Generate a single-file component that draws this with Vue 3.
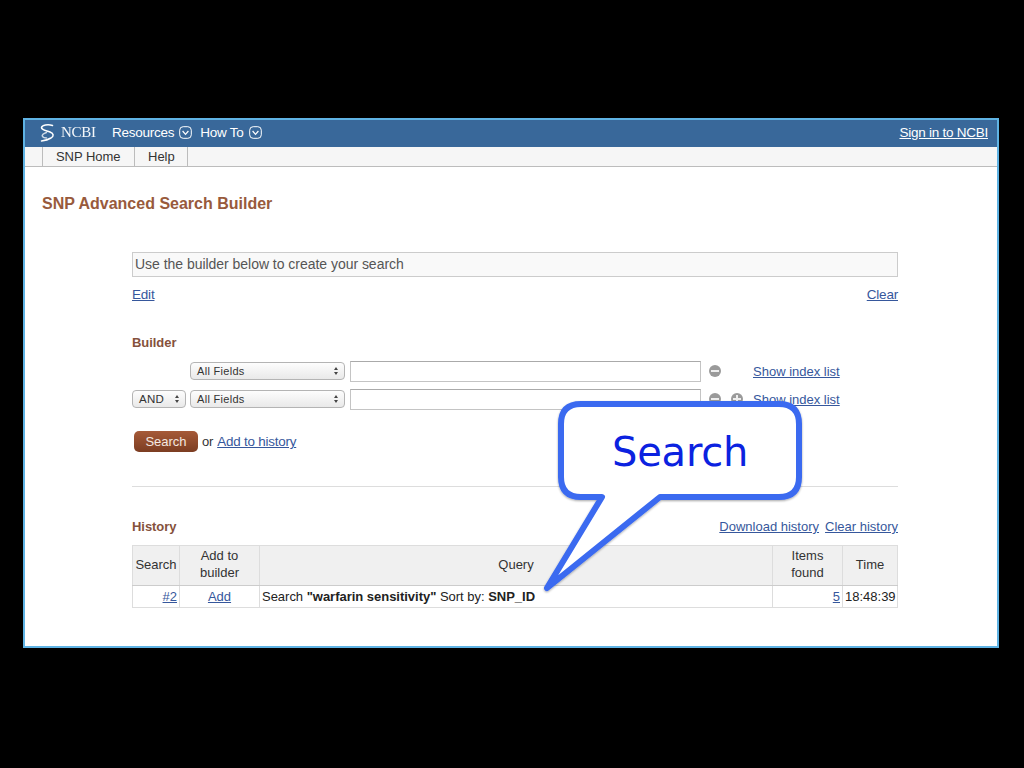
<script setup>
const fields = [
  { id: 1, op: false, plus: false },
  { id: 2, op: true, plus: true }
]
</script>

<template>
  <div class="stage">
    <div class="window">
      <header class="topbar">
        <div class="brand">
          <svg class="helix" width="16" height="20" viewBox="0 0 16 20" fill="none" stroke="#fff" stroke-width="1.5" stroke-linecap="round">
            <path d="M12.5 2.5 C8 1 2 2 1.5 4.5 C1.2 7 6 7.5 10 9 C14 10.5 14 13 11 15 C8.5 16.5 5 17.5 1.5 18" />
            <path d="M6.5 9.5 C3.5 10.5 1.5 12 2.5 13.5 C3.2 14.5 5 15 6.5 15" opacity="0.75" />
          </svg>
          <span class="ncbi">NCBI</span>
        </div>
        <span class="menu">Resources</span>
        <span class="chev"><svg width="13" height="13" viewBox="0 0 13 13" fill="none" stroke="#fff"><rect x="0.7" y="0.7" width="11.6" height="11.6" rx="3.5" /><path d="M3.6 5 L6.5 8.4 L9.4 5" stroke-width="1.2" /></svg></span>
        <span class="menu howto">How To</span>
        <span class="chev"><svg width="13" height="13" viewBox="0 0 13 13" fill="none" stroke="#fff"><rect x="0.7" y="0.7" width="11.6" height="11.6" rx="3.5" /><path d="M3.6 5 L6.5 8.4 L9.4 5" stroke-width="1.2" /></svg></span>
        <a class="signin">Sign in to NCBI</a>
      </header>

      <nav class="tabs">
        <span class="tab tab-home">SNP Home</span>
        <span class="tab tab-help">Help</span>
      </nav>

      <h1 class="title">SNP Advanced Search Builder</h1>

      <main class="content">
        <div class="querybox">Use the builder below to create your search</div>
        <div class="links-row">
          <a class="link">Edit</a>
          <a class="link">Clear</a>
        </div>

        <h2 class="section builder-head">Builder</h2>

        <div v-for="f in fields" :key="f.id" class="field-row">
          <div class="op-slot">
            <div v-if="f.op" class="select op">AND<span class="arrows"></span></div>
          </div>
          <div class="select fields">All Fields<span class="arrows"></span></div>
          <div class="textinput"></div>
          <span class="round minus"><i></i></span>
          <span class="plus-slot"><span v-if="f.plus" class="round plus"><i></i><b></b></span></span>
          <a class="link index">Show index list</a>
        </div>

        <div class="actions">
          <span class="btn">Search</span>
          <span class="or">or</span>
          <a class="link">Add to history</a>
        </div>

        <hr class="rule" />

        <div class="history-head">
          <h2 class="section">History</h2>
          <div class="history-links">
            <a class="link">Download history</a>
            <a class="link">Clear history</a>
          </div>
        </div>

        <table class="history">
          <colgroup>
            <col class="c1" /><col class="c2" /><col class="c3" /><col class="c4" /><col class="c5" />
          </colgroup>
          <thead>
            <tr>
              <th>Search</th>
              <th>Add to<br />builder</th>
              <th>Query</th>
              <th>Items<br />found</th>
              <th>Time</th>
            </tr>
          </thead>
          <tbody>
            <tr>
              <td class="right"><a class="link">#2</a></td>
              <td class="center"><a class="link">Add</a></td>
              <td class="query">Search <b>"warfarin sensitivity"</b> Sort by: <b>SNP_ID</b></td>
              <td class="right"><a class="link">5</a></td>
              <td class="right">18:48:39</td>
            </tr>
          </tbody>
        </table>
      </main>
    </div>

    <div class="callout">
      <svg width="270" height="200" viewBox="0 0 270 200">
        <defs>
          <filter id="sh" x="-5%" y="-5%" width="110%" height="110%">
            <feDropShadow dx="0" dy="1" stdDeviation="1.2" flood-color="#000" flood-opacity="0.35" />
          </filter>
        </defs>
        <path
          d="M41 6 H239 Q259 6 259 26 V79 Q259 99 239 99 H120 L7 190 L62 99 H41 Q21 99 21 79 V26 Q21 6 41 6 Z"
          fill="#fff"
          stroke="#3a6af0"
          stroke-width="6"
          stroke-linejoin="round"
          filter="url(#sh)"
        />
      </svg>
      <span class="callout-text">Search</span>
    </div>
  </div>
</template>

<style>
html, body { margin: 0; background: #000; }
</style>

<style scoped>
.stage {
  position: relative;
  width: 1024px;
  height: 768px;
  background: #000;
  padding: 118px 0 0 23px;
  box-sizing: border-box;
  font-family: "Liberation Sans", Arial, sans-serif;
  color: #222;
  overflow: hidden;
}
.window {
  width: 976px;
  height: 530px;
  box-sizing: border-box;
  border: 2px solid #5fb3e4;
  background: #fff;
}
.topbar {
  height: 27px;
  box-sizing: border-box;
  padding: 0 9px 2px 15px;
  background: #39689a;
  display: flex;
  align-items: center;
  color: #fff;
  font-size: 14px;
}
.brand { display: flex; align-items: center; gap: 5px; width: 72px; }
.helix { flex: none; }
.ncbi { font-family: "Liberation Serif", serif; font-size: 15px; letter-spacing: -0.3px; opacity: .95; }
.menu { font-size: 13.5px; letter-spacing: -0.25px; }
.chev { display: flex; margin-left: 5px; }
.howto { margin-left: 8px; }
.signin { margin-left: auto; text-decoration: underline; font-size: 13.5px; color: #fff; letter-spacing: -0.25px; }

.tabs {
  height: 20px;
  box-sizing: border-box;
  background: #f6f6f6;
  border-bottom: 1px solid #bcbcbc;
  display: flex;
  padding-left: 17px;
  font-size: 13px;
  color: #333;
}
.tab {
  display: flex;
  align-items: center;
  border-left: 1px solid #bcbcbc;
}
.tab-home { width: 92px; padding-left: 13px; box-sizing: border-box; letter-spacing: -0.05px; }
.tab-help { width: 54px; padding-left: 13px; box-sizing: border-box; border-right: 1px solid #bcbcbc; }

.title {
  margin: 28px 0 0 17px;
  font-size: 16px;
  line-height: 18px;
  font-weight: 700;
  color: #985a3c;
}

.content { margin: 39px 0 0 107px; width: 766px; font-size: 13px; }

.querybox {
  height: 25px;
  box-sizing: border-box;
  border: 1px solid #ccc;
  background: #f9f9f9;
  font-size: 14px;
  line-height: 23px;
  padding-left: 2px;
  color: #555;
  letter-spacing: -0.03px;
}
.links-row {
  display: flex;
  justify-content: space-between;
  margin-top: 9px;
  height: 17px;
  line-height: 17px;
  font-size: 13.5px;
  letter-spacing: -0.2px;
}
.link { color: #36579c; text-decoration: underline; }

.section {
  margin: 0;
  font-size: 13px;
  line-height: 16px;
  font-weight: 700;
  color: #85513c;
  letter-spacing: -0.05px;
}
.builder-head { margin-top: 32px; margin-bottom: 9px; }

.field-row {
  display: flex;
  align-items: center;
  height: 22px;
  margin-bottom: 6px;
}
.op-slot { width: 58px; flex: none; }
.select {
  position: relative;
  box-sizing: border-box;
  height: 18px;
  line-height: 16px;
  border: 1px solid #b4b4b4;
  border-radius: 4px;
  background: linear-gradient(#fdfdfd, #e9e9e9);
  font-size: 11px;
  padding-left: 6px;
  color: #333;
  letter-spacing: 0.3px;
}
.select.op { width: 54px; font-size: 11.5px; }
.select.fields { width: 155px; flex: none; }
.arrows::before, .arrows::after {
  content: "";
  position: absolute;
  right: 6px;
  border-left: 2px solid transparent;
  border-right: 2px solid transparent;
}
.arrows::before { top: 4px; border-bottom: 3px solid #444; }
.arrows::after { top: 9px; border-top: 3px solid #444; }
.textinput {
  width: 351px;
  height: 21px;
  flex: none;
  margin-left: 5px;
  box-sizing: border-box;
  border: 1px solid #c4c4c4;
  border-top-color: #aaa;
  background: #fff;
}
.round {
  position: relative;
  display: block;
  width: 12px;
  height: 12px;
  border-radius: 50%;
  background: #9a9a9a;
  flex: none;
}
.minus { margin-left: 8px; }
.round i {
  position: absolute;
  left: 2px; right: 2px; top: 5px; height: 2px;
  background: #eee;
}
.round b {
  position: absolute;
  top: 2px; bottom: 2px; left: 5px; width: 2px;
  background: #eee;
}
.plus-slot { width: 12px; margin-left: 10px; flex: none; }
.index { margin-left: 10px; font-size: 13px; letter-spacing: 0; white-space: nowrap; }

.actions {
  display: flex;
  align-items: center;
  margin-top: 21px;
  height: 21px;
  padding-left: 2px;
  font-size: 13.4px;
  letter-spacing: -0.2px;
}
.btn {
  width: 64px;
  height: 21px;
  border-radius: 5px;
  background: linear-gradient(#a65a38, #7c3d22);
  color: #f4e8e0;
  text-align: center;
  line-height: 21px;
  font-size: 13px;
  letter-spacing: 0;
}
.or { margin: 0 4px; color: #333; font-size: 13px; }

.rule {
  margin: 34px 0 0;
  border: 0;
  border-top: 1px solid #ddd;
}

.history-head {
  display: flex;
  justify-content: space-between;
  align-items: center;
  margin-top: 31px;
  height: 17px;
}
.history-links { display: flex; gap: 6px; font-size: 13px; }

.history {
  margin-top: 10px;
  width: 765px;
  table-layout: fixed;
  border-collapse: collapse;
  font-size: 13px;
  color: #222;
}
.c1 { width: 47px; }
.c2 { width: 80px; }
.c3 { width: 513px; }
.c4 { width: 70px; }
.c5 { width: 55px; }
.history th {
  height: 40px;
  box-sizing: border-box;
  padding: 0 0 3px;
  font-weight: 400;
  background: #f0f0f0;
  line-height: 17px;
  border: 1px solid #ddd;
  border-bottom: 1px solid #ccc;
  color: #333;
}
.history td {
  height: 21px;
  padding: 0 2px;
  border: 1px solid #ddd;
  white-space: nowrap;
}
.history td.query { letter-spacing: -0.02px; }
.right { text-align: right; }
.center { text-align: center; }

.callout {
  position: absolute;
  left: 540px;
  top: 398px;
  width: 270px;
  height: 200px;
}
.callout svg { display: block; }
.callout-text {
  position: absolute;
  left: 72px;
  top: 30px;
  font-family: "DejaVu Sans", Verdana, sans-serif;
  font-size: 40px;
  line-height: 48px;
  color: #0b22e0;
  letter-spacing: -0.2px;
}
</style>
